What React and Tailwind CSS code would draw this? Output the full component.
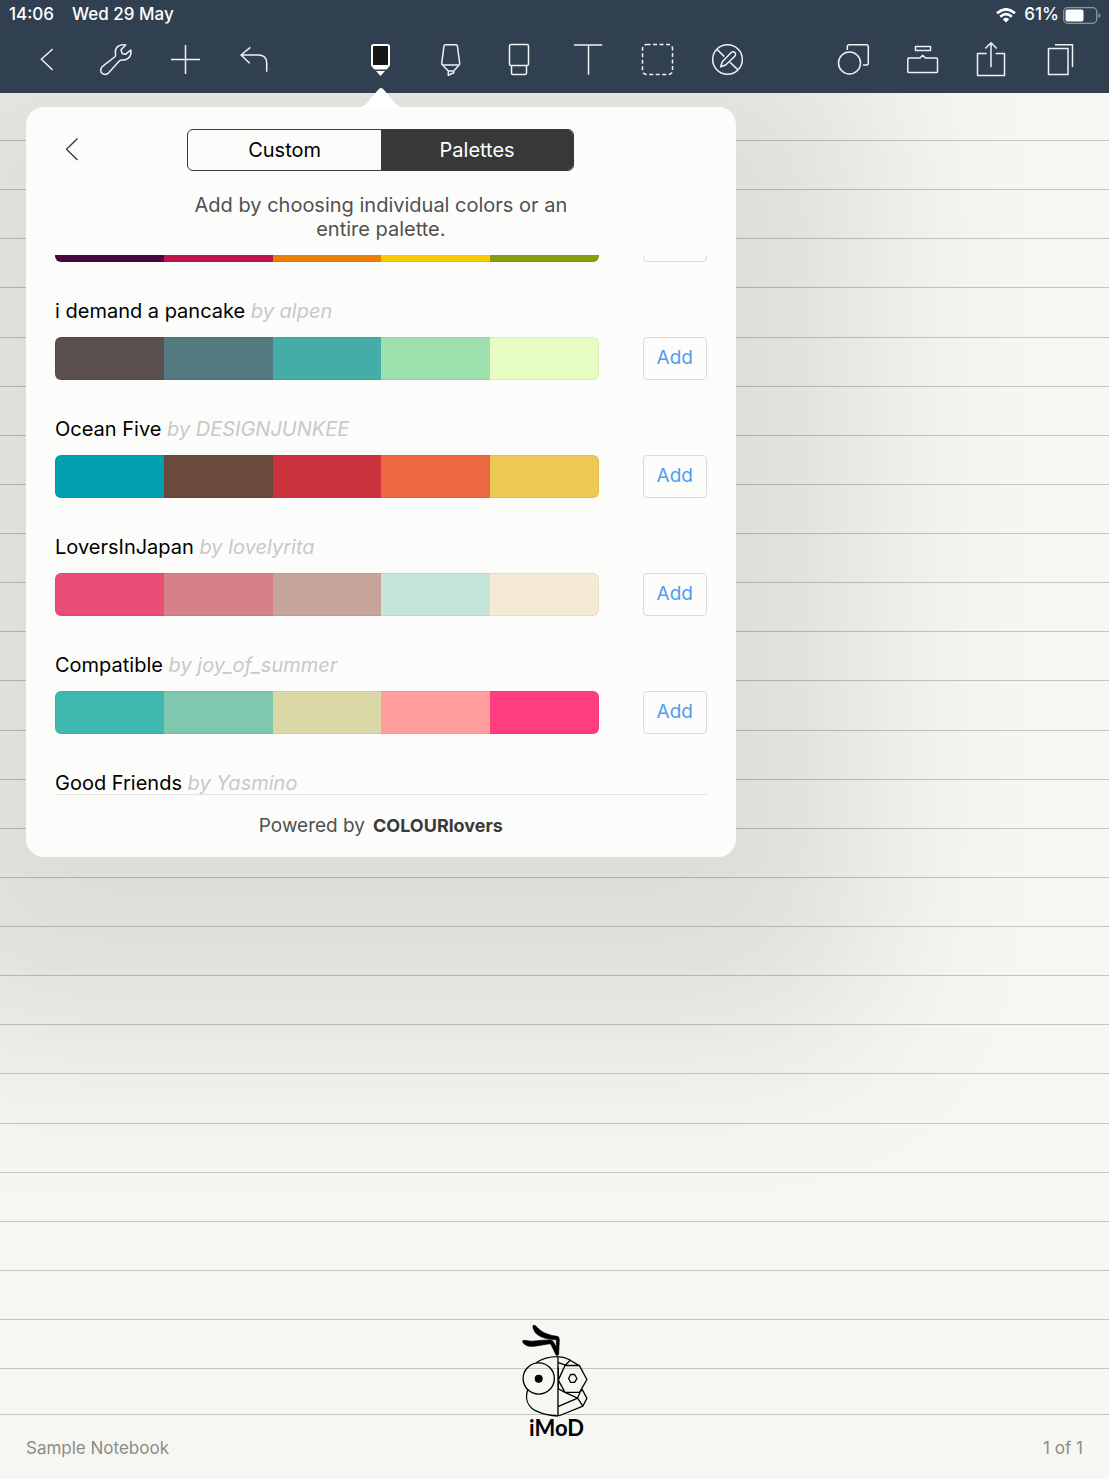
import React from "react";

function Icon({ children }) {
  return (
    <svg
      viewBox="0 0 36 36"
      className="h-9 w-9"
      fill="none"
      stroke="#eef1f4"
      strokeWidth="1.5"
      strokeLinejoin="round"
      aria-hidden="true"
    >
      {children}
    </svg>
  );
}

const leftTools = [
  { label: "Back", art: <path d="M23.700 8 12.300 18.300 23.700 29" /> },
  {
    label: "Settings",
    art: (
      <path d="M27.700 4C22 2.600 17 6.200 17.300 11.200C17.400 13 18.200 14 17.200 15.500L4.600 25.300C1.800 28 2.400 31.300 4.500 32.600C6.500 33.900 9 33.600 10.700 31.800L21.300 20C22.500 18.600 24 18.900 25.600 18.900C30.500 18.700 34 14.500 32.700 9L27.500 13.400L24.200 12.500L23 8.700Z" />
    ),
  },
  { label: "Add", art: <path d="M4 18.500H33M18.500 4V33" /> },
  {
    label: "Undo",
    art: <path d="M14.300 6.300 5 14 13.700 22.300M5 14H22C28 14 30.700 17 30.700 22V30.700" />,
  },
];

const middleTools = [
  {
    label: "Pen",
    art: (
      <>
        <rect x="10" y="4" width="17" height="21" rx="1.500" fill="#161616" stroke="#fff" strokeWidth="2" />
        <path d="M10 26H27L24.500 28.500H12.500Z" fill="#fff" stroke="none" />
        <path d="M14 30H23L18.500 35Z" fill="#fff" stroke="none" />
      </>
    ),
  },
  {
    label: "Highlighter",
    art: (
      <>
        <path d="M13.300 3.700H24Q25.200 3.700 25.400 5L27.700 22.500Q27.800 24 26.500 24H11Q9.500 24 9.700 22.500L12 5Q12.200 3.700 13.300 3.700Z" />
        <path d="M11 24.500 16.300 30H21.700L26.700 24.500M16.300 30V34.300L21.700 31.700V30" />
      </>
    ),
  },
  {
    label: "Eraser",
    art: (
      <>
        <rect x="8.500" y="3.500" width="19" height="21" rx="1.500" />
        <path d="M10.500 24.500V32Q10.500 33.500 12 33.500H24Q25.500 33.500 25.500 32V24.500" />
      </>
    ),
  },
  { label: "Text", art: <path d="M4.500 4.500V4H31.700V4.500M18.500 4V33.700" /> },
  {
    label: "Select",
    art: <rect x="3.500" y="3.500" width="30" height="30" rx="4" strokeDasharray="4 2.500" />,
  },
  {
    label: "Read only",
    art: (
      <>
        <circle cx="18.500" cy="18.500" r="14.800" />
        <path d="M7.700 8 15.300 15.600M21 21.300 29 28.900" />
        <path d="M11.700 25.700 13.300 20.800 22.500 11.300Q24.500 10 26 11.500Q27.300 13 26 15L16.700 24Z" />
      </>
    ),
  },
];

const rightTools = [
  {
    label: "Shapes",
    art: (
      <>
        <circle cx="14.500" cy="22" r="11" />
        <path d="M12.300 9V5.700Q12.300 3.700 14.300 3.700H31.300Q33.300 3.700 33.300 5.700V22Q33.300 24 31.300 24H28" />
      </>
    ),
  },
  {
    label: "Toolbox",
    art: (
      <>
        <rect x="11.500" y="5.500" width="15" height="4" />
        <path d="M5 17H16L18.700 14.200 21.400 17H32.400Q33.500 17 33.500 18.100V30.400Q33.500 31.500 32.400 31.500H5Q3.800 31.500 3.800 30.400V18.100Q3.800 17 5 17Z" />
      </>
    ),
  },
  {
    label: "Share",
    art: <path d="M13.700 12.500H4.500V34.500H31.500V12.500H22.700M18 26.300V2M12.300 7.500 18 1.800 23.700 7.500" />,
  },
  {
    label: "Pages",
    art: (
      <>
        <rect x="6.500" y="7.500" width="19.500" height="26" />
        <path d="M13 3.700H30.500V26" />
      </>
    ),
  },
];

function Tools({ tools }) {
  return tools.map((t) => (
    <button key={t.label} type="button" aria-label={t.label} className="flex flex-1 justify-center">
      <Icon>{t.art}</Icon>
    </button>
  ));
}

const palettes = [
  { colors: ["#490a3d", "#bd1550", "#e97f02", "#f8ca00", "#8a9b0f"] },
  { name: "i demand a pancake", by: "alpen", colors: ["#594f4f", "#547980", "#45ada8", "#9de0ad", "#e5fcc2"] },
  { name: "Ocean Five", by: "DESIGNJUNKEE", colors: ["#00a0b0", "#6a4a3c", "#cc333f", "#eb6841", "#edc951"] },
  { name: "LoversInJapan", by: "lovelyrita", colors: ["#e94e77", "#d68189", "#c6a49a", "#c6e5d9", "#f4ead5"] },
  { name: "Compatible", by: "joy_of_summer", colors: ["#3fb8af", "#7fc7af", "#dad8a7", "#ff9e9d", "#ff3d7f"] },
  { name: "Good Friends", by: "Yasmino" },
];

function Palette({ name, by, colors }) {
  return (
    <li>
      {name && (
        <h2 className="mb-3.5 text-xl leading-6 text-black">
          {name} <em className="text-[#c8c8c8]">by {by}</em>
        </h2>
      )}
      {colors && (
        <div className="flex h-[43px] gap-11">
          <div className="relative flex flex-1 overflow-hidden rounded-md">
            {colors.map((c) => (
              <div key={c} className="flex-1" style={{ backgroundColor: c }} />
            ))}
            <div className="absolute inset-0 rounded-md border border-black/5" />
          </div>
          <button
            type="button"
            aria-label={name ? `Add ${name}` : "Add palette"}
            className="w-16 rounded border-[1px] border-[#dadada] text-[19px] text-[#509df0]"
          >
            {name && "Add"}
          </button>
        </div>
      )}
    </li>
  );
}

function Popover() {
  return (
    <section className="absolute top-3.5 left-[26px] w-[64%] rounded-[18px] bg-[#fcfdfb] shadow-[0_50px_180px_135px_rgba(0,0,0,0.1)]">
      <svg viewBox="0 0 46 21" className="absolute -top-5 left-1/2 z-20 h-[21px] w-[46px] -translate-x-1/2" fill="#fff" aria-hidden="true">
        <path d="M0 21C8 20 10 14 20 3Q23 -1 26 3C36 14 38 20 46 21Z" />
      </svg>
      <div className="relative flex justify-center pt-[22px]">
        <button type="button" aria-label="Back" className="absolute top-7 left-8 flex h-7 w-7 items-center justify-center">
          <svg viewBox="0 0 14 24" className="h-6 w-3.5" fill="none" stroke="#333" strokeWidth="1.300" aria-hidden="true">
            <path d="M12.500 1.500 1.500 12.300 12.500 23" />
          </svg>
        </button>
        <div className="flex h-[42px] w-[387px] overflow-hidden rounded-md border border-[#383838] text-xl">
          <button type="button" className="flex-1 text-black">Custom</button>
          <button type="button" className="flex-1 bg-[#383838] text-white">Palettes</button>
        </div>
      </div>
      <p className="mx-auto mt-[22px] w-[400px] text-center text-xl leading-6 text-[#505050]">
        Add by choosing individual colors or an entire palette.
      </p>
      <div className="mx-[29px] mt-3.5 h-[540px] overflow-hidden border-b border-[#e4e4e4]">
        <ul className="-mt-9 flex flex-col gap-[37px]">
          {palettes.map((p, i) => (
            <Palette key={i} {...p} />
          ))}
        </ul>
      </div>
      <div className="flex h-[62px] items-center justify-center gap-2 text-[19px] text-[#505050]">
        Powered by
        <a href="#colourlovers" className="text-lg font-bold text-[#3a3a3a]">COLOURlovers</a>
      </div>
    </section>
  );
}

function Imod() {
  return (
    <div className="absolute bottom-10 left-1/2 flex -translate-x-1/2 flex-col items-center">
      <svg viewBox="62 44 204 280" className="h-[93px] w-[68px]" fill="none" stroke="#000" strokeWidth="4" strokeLinejoin="round" aria-hidden="true">
        <path d="M98 48Q104 46 110 54C124 70 145 78 170 81Q177 82 177 92L175 135Q174 142 167 137L152 106Q150 103 144 104C122 107 102 113 86 111C74 109 68 102 66 96Q68 91 78 94C98 99 120 91 150 92Q157 92 160 99L168 114L168 94Q168 91 163 91C138 90 115 83 104 69Q95 54 98 48Z" fill="#000" stroke="#000" strokeWidth="2" />
        <circle cx="115" cy="208" r="47" />
        <circle cx="115" cy="209" r="10" fill="#000" />
        <path d="M108 160C125 148 145 142 172 142M82 241C72 272 84 296 112 308C132 317 150 320 173 321" />
        <path d="M173 142V321M173 143C185 142 195 145 210 153L238 170L260 211L238 250H194L174 213L194 169H238M174 160 194 167M210 153 194 169M174 239 194 250L232 267L173 293M232 267 239 250 246 241L260 268L248 291L175 321M232 267 248 291M174 175V239" />
        <path d="M211 196H223L230 208L223 220H211L205 208Z" />
      </svg>
      <span className="pl-1 font-[Lato] text-[22px] leading-[22px] font-bold text-black">iMoD</span>
    </div>
  );
}

export default function App() {
  return (
    <div className="relative flex min-h-screen flex-col bg-[#f6f7f2] font-[Inter,sans-serif]">
      <header className="relative z-10 h-[93px] bg-[#314051]">
        <div className="flex h-[30px] items-center justify-between pr-2 pl-[9px] text-[17px] font-medium text-white">
          <div className="flex gap-[18px]">
            <span>14:06</span>
            <span>Wed 29 May</span>
          </div>
          <div className="flex items-center gap-2">
            <svg viewBox="0 0 20 15" className="h-[15px] w-5" fill="none" stroke="#fff" strokeWidth="2.600" aria-hidden="true">
              <path d="M1 5.200Q10-2.600 19 5.200M4.200 8.700Q10 3.600 15.800 8.700" />
              <path d="M6.800 11.200Q10 8.500 13.200 11.200L10 14.500Z" fill="#fff" stroke="none" />
            </svg>
            <span>61%</span>
            <svg viewBox="0 0 38 17" className="-ml-1 h-[17px] w-[38px]" aria-hidden="true">
              <rect x="0.700" y="0.700" width="33" height="15.600" rx="4" fill="none" stroke="#8d97a2" strokeWidth="1.300" />
              <rect x="2.500" y="2.500" width="18" height="12" rx="2" fill="#fff" />
              <path d="M35.500 6Q37.500 7 37.500 8.500T35.500 11Z" fill="#8d97a2" />
            </svg>
          </div>
        </div>
        <nav className="flex pt-[11px] pr-3.5 pl-3">
          <div className="flex flex-[4]"><Tools tools={leftTools} /></div>
          <div className="w-[57px]" />
          <div className="flex flex-[6]"><Tools tools={middleTools} /></div>
          <div className="w-[57px]" />
          <div className="flex flex-[4]"><Tools tools={rightTools} /></div>
        </nav>
      </header>

      <main className="relative flex flex-1 flex-col">
        <div className="h-12 border-b border-[#c3c4c1]" />
        {Array.from({ length: 25 }, (_, i) => (
          <div key={i} className="flex-1 border-b border-[#c3c4c1]" />
        ))}
        <div className="h-[46px] border-b border-[#c3c4c1]" />
        <Popover />
      </main>

      <footer className="flex h-16 items-center justify-between px-[26px] pt-[3px] text-[17px] text-[#8b8c89]">
        <span>Sample Notebook</span>
        <span>1 of 1</span>
      </footer>
      <Imod />
    </div>
  );
}
